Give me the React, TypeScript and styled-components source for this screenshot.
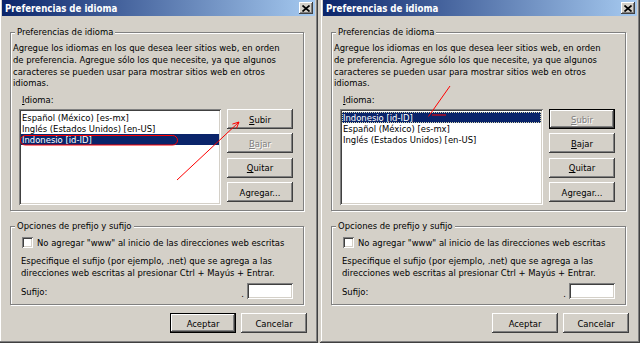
import React from 'react';
import styled, { createGlobalStyle, css } from 'styled-components';

const GlobalStyle = createGlobalStyle`
  html, body {
    margin: 0;
    padding: 0;
    background: #d4d0c8;
    overflow: hidden;
  }
  body {
    font-family: "DejaVu Sans Condensed", "DejaVu Sans", "Liberation Sans", sans-serif;
    font-size: 9.4px;
    color: #000;
  }
`;

const raised = css`
  box-shadow: inset -1px -1px #404040, inset 1px 1px #fff, inset -2px -2px #808080,
    inset 2px 2px #d4d0c8;
`;

const sunken = css`
  box-shadow: inset 1px 1px #808080, inset -1px -1px #fff, inset 2px 2px #404040,
    inset -2px -2px #d4d0c8;
`;

const Screen = styled.div`
  position: relative;
  display: flex;
  gap: 2px;
  width: 640px;
  height: 343px;
  overflow: hidden;
`;

const Window = styled.div<{ $width: number; $shift?: number }>`
  flex: none;
  display: flex;
  flex-direction: column;
  box-sizing: border-box;
  width: ${(p) => p.$width}px;
  height: 346px;
  margin-top: -3px;
  margin-left: ${(p) => p.$shift ?? 0}px;
  padding: 3px;
  background: #d4d0c8;
  box-shadow: inset -1px -1px #404040, inset 1px 1px #d4d0c8, inset -2px -2px #808080,
    inset 2px 2px #fff;
`;

const TitleBar = styled.div`
  flex: none;
  display: flex;
  align-items: center;
  justify-content: space-between;
  height: 16px;
  padding: 0 2px 0 3px;
  background: linear-gradient(to right, #0a246a, #a6caf0);
  color: #fff;
  font-weight: bold;
  font-size: 9.6px;
`;

const CloseButton = styled.div`
  display: flex;
  align-items: center;
  justify-content: center;
  width: 14px;
  height: 12px;
  background: #d4d0c8;
  ${raised};
`;

const Body = styled.div`
  flex: 1;
  display: flex;
  flex-direction: column;
  padding: 16px 8px 0 8px;
`;

const GroupBox = styled.div<{ $top?: number }>`
  display: flex;
  flex-direction: column;
  margin: ${(p) => p.$top ?? 0}px 3px 0 0;
  border: 1px solid #808080;
  box-shadow: inset 1px 1px #fff, 1px 1px #fff;
`;

const Caption = styled.div`
  align-self: flex-start;
  margin: -7px 0 0 4px;
  padding: 0 2px;
  line-height: 12px;
  background: #d4d0c8;
`;

const GroupContent = styled.div<{ $inset: number }>`
  display: flex;
  flex-direction: column;
  padding: 4px 10px 5px ${(p) => p.$inset}px;
`;

const Paragraph = styled.div<{ $lh: number }>`
  line-height: ${(p) => p.$lh}px;
  white-space: nowrap;
`;

const FieldLabel = styled.div`
  margin: 5px 0 0 9px;
  line-height: 12px;
`;

const Key = styled.span`
  text-decoration: underline;
  text-underline-offset: 1px;
`;

const ListRow = styled.div`
  display: flex;
  gap: 6px;
  margin: 3px 0 0 6px;
`;

const ListBox = styled.div`
  box-sizing: border-box;
  width: 203px;
  height: 96px;
  padding: 3px 2px 2px;
  background: #fff;
  ${sunken};
`;

const ListItem = styled.div<{ $selected?: boolean; $focused?: boolean }>`
  height: 11px;
  line-height: 11px;
  padding-left: 1px;
  white-space: nowrap;
  ${(p) =>
    p.$selected &&
    css`
      background: #0a246a;
      color: #fff;
    `}
  ${(p) =>
    p.$focused &&
    css`
      outline: 1px dotted #d8d8b0;
      outline-offset: -1px;
    `}
`;

const ButtonColumn = styled.div`
  display: flex;
  flex-direction: column;
  gap: 4.3px;
`;

const PushButton = styled.div<{ $default?: boolean; $disabled?: boolean }>`
  box-sizing: border-box;
  display: flex;
  align-items: center;
  justify-content: center;
  width: 66px;
  height: 20px;
  background: #d4d0c8;
  white-space: nowrap;
  ${raised};
  ${(p) =>
    p.$default &&
    css`
      border: 1px solid #000;
      box-shadow: inset -1px -1px #404040, inset 1px 1px #fff, inset -2px -2px #808080;
    `}
  ${(p) =>
    p.$disabled &&
    css`
      color: #808080;
      text-shadow: 1px 1px #fff;
    `}
`;

const CheckRow = styled.div`
  display: flex;
  align-items: center;
  gap: 4px;
  height: 12px;
  margin-left: 1px;
`;

const CheckBox = styled.div`
  width: 11px;
  height: 11px;
  background: #fff;
  ${sunken};
`;

const Hint = styled(Paragraph)`
  margin-top: 7px;
`;

const SuffixRow = styled.div`
  display: flex;
  align-items: center;
  margin-top: 5px;
`;

const Spacer = styled.div`
  flex: 1;
`;

const Dot = styled.span`
  margin: 4px 3px 0 0;
`;

const TextField = styled.div`
  width: 46px;
  height: 16px;
  background: #fff;
  ${sunken};
`;

const Footer = styled.div`
  display: flex;
  justify-content: flex-end;
  gap: 5px;
  margin-top: 8px;
`;

const Marks = styled.svg`
  position: absolute;
  left: 0;
  top: 0;
  pointer-events: none;
`;

type Lang = { name: string };

const CloseGlyph = () => (
  <svg width="8" height="7" viewBox="0 0 8 7">
    <path d="M0.5 0.5 L7.5 6.5 M7.5 0.5 L0.5 6.5" stroke="#000" strokeWidth="1.7" />
  </svg>
);

const Dialog: React.FC<{
  width: number;
  shift?: number;
  langs: Lang[];
  selected: number;
  focused?: boolean;
  upDisabled?: boolean;
  downDisabled?: boolean;
  upDefault?: boolean;
  okDefault?: boolean;
}> = ({ width, shift, langs, selected, focused, upDisabled, downDisabled, upDefault, okDefault }) => (
  <Window $width={width} $shift={shift}>
    <TitleBar>
      <span>Preferencias de idioma</span>
      <CloseButton>
        <CloseGlyph />
      </CloseButton>
    </TitleBar>
    <Body>
      <GroupBox>
        <Caption>Preferencias de idioma</Caption>
        <GroupContent $inset={2}>
          <Paragraph $lh={11.8}>
            Agregue los idiomas en los que desea leer sitios web, en orden
            <br />
            de preferencia. Agregue sólo los que necesite, ya que algunos
            <br />
            caracteres se pueden usar para mostrar sitios web en otros
            <br />
            idiomas.
          </Paragraph>
          <FieldLabel>
            <Key>I</Key>dioma:
          </FieldLabel>
          <ListRow>
            <ListBox>
              {langs.map((l, i) => (
                <ListItem key={l.name} $selected={i === selected} $focused={focused && i === selected}>
                  {l.name}
                </ListItem>
              ))}
            </ListBox>
            <ButtonColumn>
              <PushButton $disabled={upDisabled} $default={upDefault}>
                <Key>S</Key>ubir
              </PushButton>
              <PushButton $disabled={downDisabled}>
                <Key>B</Key>ajar
              </PushButton>
              <PushButton>
                <Key>Q</Key>uitar
              </PushButton>
              <PushButton>
                A<Key>g</Key>regar...
              </PushButton>
            </ButtonColumn>
          </ListRow>
        </GroupContent>
      </GroupBox>
      <GroupBox $top={15}>
        <Caption>Opciones de prefijo y sufijo</Caption>
        <GroupContent $inset={10}>
          <CheckRow>
            <CheckBox />
            <span>No agregar "www" al inicio de las direcciones web escritas</span>
          </CheckRow>
          <Hint $lh={11.5}>
            Especifique el sufijo (por ejemplo, .net) que se agrega a las
            <br />
            direcciones web escritas al presionar Ctrl + Mayús + Entrar.
          </Hint>
          <SuffixRow>
            <span>Sufijo:</span>
            <Spacer />
            <Dot>.</Dot>
            <TextField />
          </SuffixRow>
        </GroupContent>
      </GroupBox>
      <Footer>
        <PushButton $default={okDefault}>Aceptar</PushButton>
        <PushButton>Cancelar</PushButton>
      </Footer>
    </Body>
  </Window>
);

const before: Lang[] = [
  { name: 'Español (México) [es-mx]' },
  { name: 'Inglés (Estados Unidos) [en-US]' },
  { name: 'Indonesio [id-ID]' },
];

const after: Lang[] = [before[2], before[0], before[1]];

const App: React.FC = () => (
  <>
    <GlobalStyle />
    <Screen>
      <Dialog width={319} shift={-1} langs={before} selected={2} downDisabled okDefault />
      <Dialog width={320} langs={after} selected={0} focused upDisabled upDefault />
      <Marks width="640" height="343" viewBox="0 0 640 343">
        <g fill="none" stroke="#ff0000" strokeWidth="1">
          <rect x="20.5" y="135.5" width="157" height="9.5" rx="4.7" />
          <path d="M177 180 L239 122 M232.4 124.1 L239 122 L236.4 128.5" />
          <path d="M450 86 L428.5 116.5 M432 115 L446 115" />
        </g>
      </Marks>
    </Screen>
  </>
);

export default App;
